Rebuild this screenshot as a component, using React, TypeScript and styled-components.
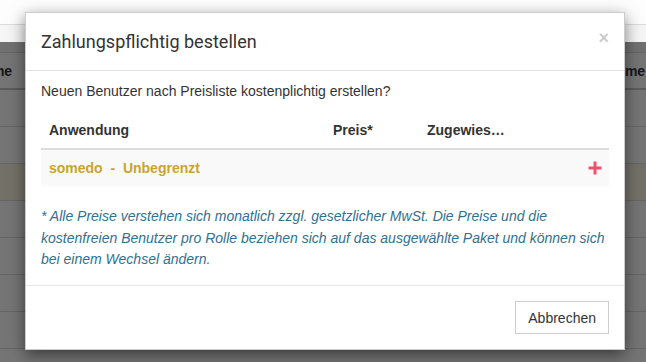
import styled, { createGlobalStyle } from 'styled-components';

const GlobalStyle = createGlobalStyle`
  html, body {
    margin: 0;
    padding: 0;
    background: #ffffff;
    font-family: "Liberation Sans", Arial, sans-serif;
    font-size: 14px;
    color: #333;
  }
  * { box-sizing: border-box; }
`;

const Page = styled.div`
  position: relative;
  width: 646px;
  height: 362px;
  overflow: hidden;
  background: #fff;
`;

const TopBar = styled.div`
  height: 25px;
  background: #fdfdfd;
  border-bottom: 1px solid #dcdcdc;
`;

const SubBar = styled.div`
  height: 28px;
  background: #f6f6f6;
  border-bottom: 1px solid #ddd;
`;

const BgRow = styled.div<{ $head?: boolean; $warn?: boolean }>`
  display: flex;
  height: 37px;
  margin-left: -34px;
  background: ${({ $warn }) => ($warn ? '#fcf8e3' : '#fff')};
  border-bottom: ${({ $head }) => ($head ? '2px solid #c8c8c8' : '1px solid #ddd')};
  font-weight: ${({ $head }) => ($head ? 700 : 400)};
  color: #333;
`;

const BgCell = styled.div<{ $w: number }>`
  width: ${({ $w }) => $w}px;
  flex: none;
  padding: 9px 8px;
  line-height: 19px;
  white-space: nowrap;
`;

const Backdrop = styled.div`
  position: absolute;
  left: 0;
  right: 0;
  top: 42px;
  bottom: 0;
  background: rgba(0, 0, 0, 0.54);
`;

const Modal = styled.div`
  position: absolute;
  left: 25px;
  top: 12px;
  width: 600px;
  background: #fff;
  border: 1px solid rgba(0, 0, 0, 0.2);
  box-shadow: 0 5px 15px rgba(0, 0, 0, 0.5);
  display: flex;
  flex-direction: column;
`;

const Header = styled.div`
  display: flex;
  align-items: flex-start;
  justify-content: space-between;
  padding: 15px;
  border-bottom: 1px solid #e5e5e5;
`;

const Title = styled.h4`
  margin: 0;
  font-family: Roboto, "Liberation Sans", sans-serif;
  font-weight: 400;
  font-size: 18px;
  line-height: 27px;
  color: #333;
`;

const Close = styled.button`
  border: none;
  background: none;
  padding: 0;
  font-family: "Liberation Sans", Arial, sans-serif;
  font-size: 18px;
  font-weight: 700;
  line-height: 20px;
  color: #000;
  opacity: 0.2;
  cursor: pointer;
`;

const Body = styled.div`
  padding: 10px 15px 14px;
`;

const Lead = styled.p`
  margin: 0 0 11px;
  line-height: 20px;
`;

const Table = styled.div`
  display: flex;
  flex-direction: column;
  margin-bottom: 20px;
`;

const Row = styled.div<{ $head?: boolean }>`
  display: grid;
  grid-template-columns: 284px 94px 94px 1fr;
  background: ${({ $head }) => ($head ? '#fff' : '#f9f9f9')};
  border-bottom: ${({ $head }) => ($head ? '2px solid #ddd' : 'none')};
`;

const Cell = styled.div<{ $right?: boolean }>`
  padding: 8px;
  line-height: 20px;
  overflow: hidden;
  white-space: nowrap;
  text-overflow: ellipsis;
  display: flex;
  align-items: center;
  justify-content: ${({ $right }) => ($right ? 'flex-end' : 'flex-start')};
`;

const HeadCell = styled(Cell)`
  display: block;
  font-weight: 700;
  color: #333;
`;

const AppName = styled.span`
  font-weight: 700;
  color: #c9a52c;
`;

const PlusButton = styled.button`
  border: none;
  background: none;
  padding: 0;
  margin-right: -1px;
  width: 14px;
  height: 14px;
  display: flex;
  cursor: pointer;
`;

const Note = styled.p`
  margin: 0;
  font-style: italic;
  line-height: 21.5px;
  color: #31708f;
`;

const Footer = styled.div`
  display: flex;
  justify-content: flex-end;
  padding: 15px;
  border-top: 1px solid #e5e5e5;
`;

const Button = styled.button`
  height: 33px;
  padding: 6px 12px;
  background: #fff;
  border: 1px solid #ccc;
  border-radius: 0;
  font-family: "Liberation Sans", Arial, sans-serif;
  font-size: 14px;
  line-height: 20px;
  color: #333;
  cursor: pointer;
`;

const bgRows = [false, false, true, false, false, false, false];

export default function App() {
  return (
    <>
      <GlobalStyle />
      <Page>
        <TopBar />
        <SubBar />
        <BgRow $head>
          <BgCell $w={633}>Name</BgCell>
          <BgCell $w={100}>Name</BgCell>
        </BgRow>
        {bgRows.map((warn, i) => (
          <BgRow key={i} $warn={warn}>
            <BgCell $w={633} />
            <BgCell $w={100} />
          </BgRow>
        ))}
        <Backdrop />

        <Modal>
          <Header>
            <Title>Zahlungspflichtig bestellen</Title>
            <Close aria-label="Schließen">×</Close>
          </Header>

          <Body>
            <Lead>Neuen Benutzer nach Preisliste kostenplichtig erstellen?</Lead>
            <Table>
              <Row $head>
                <HeadCell>Anwendung</HeadCell>
                <HeadCell>Preis*</HeadCell>
                <HeadCell>Zugewiesen</HeadCell>
                <HeadCell />
              </Row>
              <Row>
                <Cell>
                  <AppName>somedo&nbsp; -&nbsp; Unbegrenzt</AppName>
                </Cell>
                <Cell />
                <Cell />
                <Cell $right>
                  <PlusButton aria-label="Hinzufügen">
                    <svg width="14" height="14" viewBox="0 0 14 14">
                      <rect x="5.5" y="0.5" width="3" height="13" fill="#f0506e" />
                      <rect x="0.5" y="5.5" width="13" height="3" fill="#f0506e" />
                    </svg>
                  </PlusButton>
                </Cell>
              </Row>
            </Table>
            <Note>
              * Alle Preise verstehen sich monatlich zzgl. gesetzlicher MwSt. Die Preise und die
              kostenfreien Benutzer pro Rolle beziehen sich auf das ausgewählte Paket und können sich
              bei einem Wechsel ändern.
            </Note>
          </Body>

          <Footer>
            <Button>Abbrechen</Button>
          </Footer>
        </Modal>
      </Page>
    </>
  );
}
